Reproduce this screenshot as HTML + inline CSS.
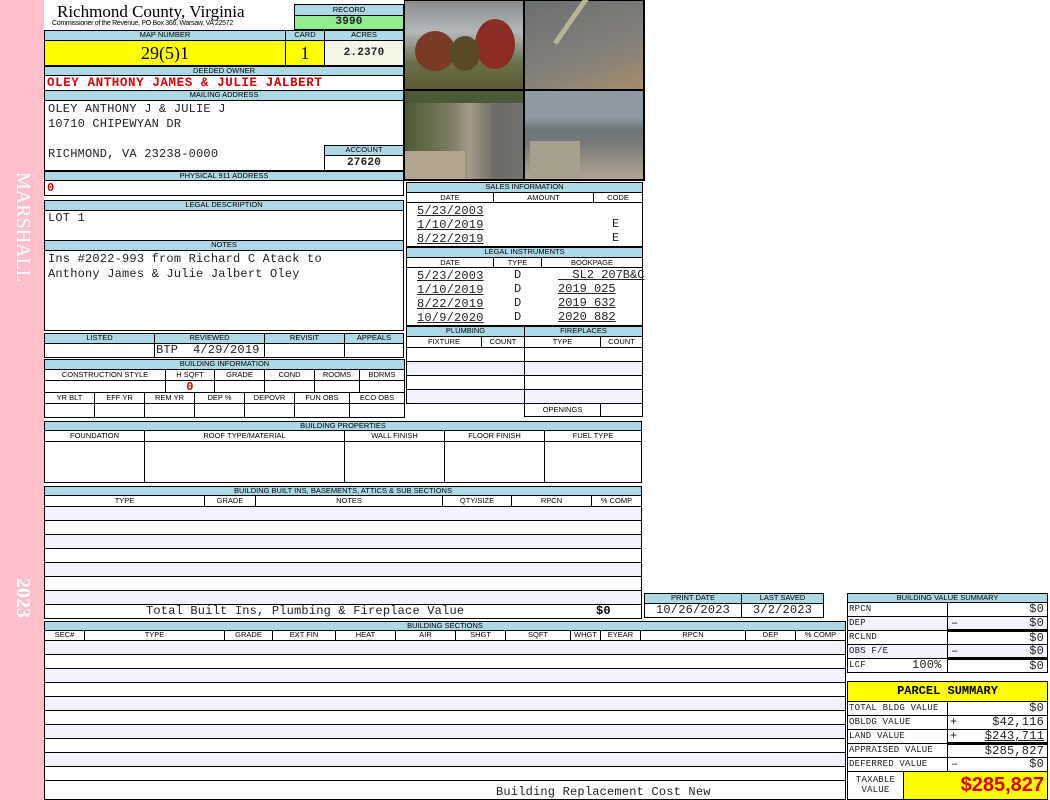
<!DOCTYPE html>
<html><head><meta charset="utf-8"><style>
*{margin:0;padding:0;box-sizing:border-box}
body{width:1050px;height:800px;background:#fff;position:relative;overflow:hidden;font-family:"Liberation Sans",sans-serif}
.c{position:absolute;border:1px solid #000;overflow:hidden;white-space:nowrap}
.h{background:#add8e6;font-size:7.5px;text-align:center;line-height:8px;color:#000}
.s{font-size:7.5px;text-align:center;line-height:9px}
.m{font-family:"Liberation Mono",monospace;font-size:12px;letter-spacing:.2px;color:#222}
.r{text-align:right;padding-right:3px}
.l{background:#f3f3fb}
.y{background:#ffff00}
.bx{border-bottom:3px solid #000}
</style></head><body>
<div style="position:absolute;left:0;top:0;width:44px;height:800px;background:#ffc0cb"></div>
<div style="position:absolute;left:10px;top:172px;width:24px;font-family:'Liberation Serif',serif;font-size:20px;color:#fff;writing-mode:vertical-rl;letter-spacing:0px">MARSHALL</div>
<div style="position:absolute;left:10px;top:578px;width:24px;font-family:'Liberation Serif',serif;font-size:20px;font-weight:bold;color:#fff;writing-mode:vertical-rl">2023</div>

<div style="position:absolute;left:57px;top:2px;font-family:'Liberation Serif',serif;font-size:17px">Richmond County, Virginia</div>
<div style="position:absolute;left:52px;top:20px;font-size:7px;letter-spacing:-0.3px">Commissioner of the Revenue, PO Box 366, Warsaw, VA 22572</div>

<div class="c h" style="left:294px;top:4px;width:110px;height:12px;line-height:10px">RECORD</div>
<div class="c m" style="left:294px;top:15px;width:110px;height:15px;background:#90ee90;text-align:center;font-weight:bold;line-height:13px;font-size:11px">3990</div>

<div class="c h" style="left:44px;top:30px;width:242px;height:11px">MAP NUMBER</div>
<div class="c h" style="left:285px;top:30px;width:40px;height:11px">CARD</div>
<div class="c h" style="left:324px;top:30px;width:80px;height:11px">ACRES</div>
<div class="c y" style="left:44px;top:40px;width:242px;height:26px;text-align:center;font-family:'Liberation Serif',serif;font-size:18px;line-height:24px">29(5)1</div>
<div class="c y" style="left:285px;top:40px;width:40px;height:26px;text-align:center;font-family:'Liberation Serif',serif;font-size:18px;line-height:24px">1</div>
<div class="c m" style="left:324px;top:40px;width:80px;height:26px;background:#f5f5e6;text-align:center;font-weight:bold;line-height:24px;font-size:11px">2.2370</div>

<div class="c h" style="left:44px;top:66px;width:360px;height:10px">DEEDED OWNER</div>
<div class="c m" style="left:44px;top:75px;width:360px;height:16px;color:#d00;font-weight:bold;font-size:12.5px;letter-spacing:.6px;line-height:15px;padding-left:2px">OLEY ANTHONY JAMES &amp; JULIE JALBERT</div>
<div class="c h" style="left:44px;top:90px;width:360px;height:11px">MAILING ADDRESS</div>
<div class="c m" style="left:44px;top:100px;width:360px;height:71px;padding-left:3px;line-height:15px;padding-top:1px">OLEY ANTHONY J &amp; JULIE J<br>10710 CHIPEWYAN DR<br><br>RICHMOND, VA 23238-0000</div>
<div class="c h" style="left:324px;top:145px;width:80px;height:11px">ACCOUNT</div>
<div class="c m" style="left:324px;top:155px;width:80px;height:16px;text-align:center;font-weight:bold;line-height:14px;font-size:11px">27620</div>
<div class="c h" style="left:44px;top:171px;width:360px;height:10px">PHYSICAL 911 ADDRESS</div>
<div class="c m" style="left:44px;top:180px;width:360px;height:16px;color:#b00;font-weight:bold;padding-left:2px;line-height:15px">0</div>

<!-- photos -->
<div style="position:absolute;left:404px;top:0;width:241px;height:181px;background:#000"></div>
<div style="position:absolute;left:405px;top:1px;width:118px;height:88px;background:linear-gradient(#8a8c8e 0%,#b5b8ba 35%,#a7a9a5 42%,#6a6f4a 70%,#5d5a32 100%)">
<div style="position:absolute;left:10px;top:30px;width:40px;height:40px;border-radius:50%;background:#7a3a25"></div>
<div style="position:absolute;left:70px;top:18px;width:40px;height:50px;border-radius:50%;background:#8b2c25"></div>
<div style="position:absolute;left:45px;top:35px;width:30px;height:35px;border-radius:50%;background:#5a4a2a"></div></div>
<div style="position:absolute;left:525px;top:1px;width:118px;height:88px;background:linear-gradient(160deg,#6b6e70,#84807a 60%,#a38d6e)">
<div style="position:absolute;left:30px;top:40px;width:90px;height:5px;background:#b8b49a;transform:rotate(-55deg);transform-origin:left"></div></div>
<div style="position:absolute;left:405px;top:91px;width:118px;height:88px;background:linear-gradient(90deg,#4d5a35 0%,#7f7e68 40%,#a59a88 55%,#6e6c66 75%,#707070 100%)">
<div style="position:absolute;left:0;top:0;width:118px;height:12px;background:#4a5a38"></div>
<div style="position:absolute;left:0;top:60px;width:60px;height:28px;background:#b0a48f"></div></div>
<div style="position:absolute;left:525px;top:91px;width:118px;height:88px;background:linear-gradient(#8e9aa3 0%,#8e9aa3 30%,#6b7378 45%,#7a7a78 60%,#b0a593 100%)">
<div style="position:absolute;left:5px;top:50px;width:50px;height:38px;background:#a8a08e"></div></div>

<!-- sales -->
<div class="c h" style="left:406px;top:182px;width:237px;height:11px">SALES INFORMATION</div>
<div class="c s" style="left:406px;top:192px;width:88px;height:11px">DATE</div>
<div class="c s" style="left:493px;top:192px;width:101px;height:11px">AMOUNT</div>
<div class="c s" style="left:593px;top:192px;width:50px;height:11px">CODE</div>
<div class="c m" style="left:406px;top:202px;width:237px;height:45px;line-height:14px;padding-left:10px;padding-top:1px;text-decoration:underline">5/23/2003<br>1/10/2019<br>8/22/2019</div>
<div class="m" style="position:absolute;left:612px;top:217px;line-height:14px">E<br>E</div>

<div class="c h" style="left:406px;top:247px;width:237px;height:11px">LEGAL INSTRUMENTS</div>
<div class="c s" style="left:406px;top:257px;width:88px;height:11px">DATE</div>
<div class="c s" style="left:493px;top:257px;width:49px;height:11px">TYPE</div>
<div class="c s" style="left:541px;top:257px;width:102px;height:11px">BOOKPAGE</div>
<div class="c m" style="left:406px;top:267px;width:237px;height:59px;line-height:14px;padding-left:10px;padding-top:1px;text-decoration:underline">5/23/2003<br>1/10/2019<br>8/22/2019<br>10/9/2020</div>
<div class="m" style="position:absolute;left:514px;top:268px;line-height:14px">D<br>D<br>D<br>D</div>
<div class="m" style="position:absolute;left:558px;top:268px;line-height:14px;text-decoration:underline;letter-spacing:0">&nbsp;&nbsp;SL2 207B&amp;C<br>2019 025<br>2019 632<br>2020 882</div>

<!-- legal/notes -->
<div class="c h" style="left:44px;top:200px;width:360px;height:11px">LEGAL DESCRIPTION</div>
<div class="c m" style="left:44px;top:210px;width:360px;height:31px;padding-left:3px;line-height:15px">LOT 1</div>
<div class="c h" style="left:44px;top:240px;width:360px;height:11px">NOTES</div>
<div class="c m" style="left:44px;top:250px;width:360px;height:81px;padding-left:3px;line-height:15px;padding-top:1px">Ins #2022-993 from Richard C Atack to<br>Anthony James &amp; Julie Jalbert Oley</div>

<!-- listed -->
<div class="c h" style="left:44px;top:333px;width:111px;height:11px">LISTED</div>
<div class="c h" style="left:154px;top:333px;width:111px;height:11px">REVIEWED</div>
<div class="c h" style="left:264px;top:333px;width:81px;height:11px">REVISIT</div>
<div class="c h" style="left:344px;top:333px;width:60px;height:11px">APPEALS</div>
<div class="c" style="left:44px;top:343px;width:111px;height:15px"></div>
<div class="c m" style="left:154px;top:343px;width:111px;height:15px;line-height:13px;padding-left:1px">BTP&nbsp;&nbsp;4/29/2019</div>
<div class="c" style="left:264px;top:343px;width:81px;height:15px"></div>
<div class="c" style="left:344px;top:343px;width:60px;height:15px"></div>

<!-- building info -->
<div class="c h" style="left:44px;top:359px;width:361px;height:11px">BUILDING INFORMATION</div>
<div class="c s" style="left:44px;top:369px;width:122px;height:12px">CONSTRUCTION STYLE</div>
<div class="c s" style="left:165px;top:369px;width:50px;height:12px">H SQFT</div>
<div class="c s" style="left:214px;top:369px;width:51px;height:12px">GRADE</div>
<div class="c s" style="left:264px;top:369px;width:51px;height:12px">COND</div>
<div class="c s" style="left:314px;top:369px;width:46px;height:12px">ROOMS</div>
<div class="c s" style="left:359px;top:369px;width:46px;height:12px">BDRMS</div>
<div class="c" style="left:44px;top:380px;width:122px;height:13px"></div>
<div class="c m" style="left:165px;top:380px;width:50px;height:13px;color:#c00;font-weight:bold;text-align:center;line-height:12px">0</div>
<div class="c" style="left:214px;top:380px;width:51px;height:13px"></div>
<div class="c" style="left:264px;top:380px;width:51px;height:13px"></div>
<div class="c" style="left:314px;top:380px;width:46px;height:13px"></div>
<div class="c" style="left:359px;top:380px;width:46px;height:13px"></div>
<div class="c s" style="left:44px;top:392px;width:51px;height:12px">YR BLT</div>
<div class="c s" style="left:94px;top:392px;width:51px;height:12px">EFF YR</div>
<div class="c s" style="left:144px;top:392px;width:51px;height:12px">REM YR</div>
<div class="c s" style="left:194px;top:392px;width:51px;height:12px">DEP %</div>
<div class="c s" style="left:244px;top:392px;width:51px;height:12px">DEPOVR</div>
<div class="c s" style="left:294px;top:392px;width:56px;height:12px">FUN OBS</div>
<div class="c s" style="left:349px;top:392px;width:56px;height:12px">ECO OBS</div>
<div class="c" style="left:44px;top:403px;width:51px;height:15px"></div>
<div class="c" style="left:94px;top:403px;width:51px;height:15px"></div>
<div class="c" style="left:144px;top:403px;width:51px;height:15px"></div>
<div class="c" style="left:194px;top:403px;width:51px;height:15px"></div>
<div class="c" style="left:244px;top:403px;width:51px;height:15px"></div>
<div class="c" style="left:294px;top:403px;width:56px;height:15px"></div>
<div class="c" style="left:349px;top:403px;width:56px;height:15px"></div>

<!-- plumbing -->
<div class="c h" style="left:406px;top:326px;width:119px;height:11px">PLUMBING</div>
<div class="c h" style="left:524px;top:326px;width:119px;height:11px">FIREPLACES</div>
<div class="c s" style="left:406px;top:336px;width:76px;height:12px">FIXTURE</div>
<div class="c s" style="left:481px;top:336px;width:44px;height:12px">COUNT</div>
<div class="c s" style="left:524px;top:336px;width:77px;height:12px">TYPE</div>
<div class="c s" style="left:600px;top:336px;width:43px;height:12px">COUNT</div>
<div class="c" style="left:406px;top:347px;width:119px;height:15px"></div>
<div class="c l" style="left:406px;top:361px;width:119px;height:15px"></div>
<div class="c" style="left:406px;top:375px;width:119px;height:15px"></div>
<div class="c l" style="left:406px;top:389px;width:119px;height:15px"></div>
<div class="c" style="left:524px;top:347px;width:119px;height:15px"></div>
<div class="c l" style="left:524px;top:361px;width:119px;height:15px"></div>
<div class="c" style="left:524px;top:375px;width:119px;height:15px"></div>
<div class="c l" style="left:524px;top:389px;width:119px;height:15px"></div>
<div class="c s" style="left:524px;top:403px;width:77px;height:14px;line-height:12px">OPENINGS</div>
<div class="c" style="left:600px;top:403px;width:43px;height:14px"></div>

<!-- building properties -->
<div class="c h" style="left:44px;top:421px;width:598px;height:10px">BUILDING PROPERTIES</div>
<div class="c s" style="left:44px;top:430px;width:101px;height:12px">FOUNDATION</div>
<div class="c s" style="left:144px;top:430px;width:201px;height:12px">ROOF TYPE/MATERIAL</div>
<div class="c s" style="left:344px;top:430px;width:101px;height:12px">WALL FINISH</div>
<div class="c s" style="left:444px;top:430px;width:101px;height:12px">FLOOR FINISH</div>
<div class="c s" style="left:544px;top:430px;width:98px;height:12px">FUEL TYPE</div>
<div class="c" style="left:44px;top:441px;width:101px;height:42px"></div>
<div class="c" style="left:144px;top:441px;width:201px;height:42px"></div>
<div class="c" style="left:344px;top:441px;width:101px;height:42px"></div>
<div class="c" style="left:444px;top:441px;width:101px;height:42px"></div>
<div class="c" style="left:544px;top:441px;width:98px;height:42px"></div>

<!-- built ins -->
<div class="c h" style="left:44px;top:486px;width:598px;height:10px">BUILDING BUILT INS, BASEMENTS, ATTICS &amp; SUB SECTIONS</div>
<div class="c s" style="left:44px;top:495px;width:161px;height:12px">TYPE</div>
<div class="c s" style="left:204px;top:495px;width:52px;height:12px">GRADE</div>
<div class="c s" style="left:255px;top:495px;width:188px;height:12px">NOTES</div>
<div class="c s" style="left:442px;top:495px;width:70px;height:12px">QTY/SIZE</div>
<div class="c s" style="left:511px;top:495px;width:81px;height:12px">RPCN</div>
<div class="c s" style="left:591px;top:495px;width:51px;height:12px">% COMP</div>
<div class="c l" style="left:44px;top:506px;width:598px;height:15px"></div>
<div class="c" style="left:44px;top:520px;width:598px;height:15px"></div>
<div class="c l" style="left:44px;top:534px;width:598px;height:15px"></div>
<div class="c" style="left:44px;top:548px;width:598px;height:15px"></div>
<div class="c l" style="left:44px;top:562px;width:598px;height:15px"></div>
<div class="c" style="left:44px;top:576px;width:598px;height:15px"></div>
<div class="c l" style="left:44px;top:590px;width:598px;height:15px"></div>
<div class="c m" style="left:44px;top:604px;width:598px;height:15px;line-height:13px;padding-left:101px">Total Built Ins, Plumbing &amp; Fireplace Value<span style="position:absolute;left:551px;font-weight:bold;color:#000">$0</span></div>

<!-- print date -->
<div class="c h" style="left:644px;top:593px;width:98px;height:11px">PRINT DATE</div>
<div class="c h" style="left:741px;top:593px;width:83px;height:11px">LAST SAVED</div>
<div class="c m" style="left:644px;top:603px;width:98px;height:15px;text-align:center;line-height:13px">10/26/2023</div>
<div class="c m" style="left:741px;top:603px;width:83px;height:15px;text-align:center;line-height:13px">3/2/2023</div>

<!-- building sections -->
<div class="c h" style="left:44px;top:621px;width:802px;height:10px">BUILDING SECTIONS</div>
<div class="c s" style="left:44px;top:630px;width:41px;height:11px;line-height:8px">SEC#</div>
<div class="c s" style="left:84px;top:630px;width:141px;height:11px;line-height:8px">TYPE</div>
<div class="c s" style="left:224px;top:630px;width:49px;height:11px;line-height:8px">GRADE</div>
<div class="c s" style="left:272px;top:630px;width:64px;height:11px;line-height:8px">EXT FIN</div>
<div class="c s" style="left:335px;top:630px;width:61px;height:11px;line-height:8px">HEAT</div>
<div class="c s" style="left:395px;top:630px;width:61px;height:11px;line-height:8px">AIR</div>
<div class="c s" style="left:455px;top:630px;width:51px;height:11px;line-height:8px">SHGT</div>
<div class="c s" style="left:505px;top:630px;width:66px;height:11px;line-height:8px">SQFT</div>
<div class="c s" style="left:570px;top:630px;width:31px;height:11px;line-height:8px">WHGT</div>
<div class="c s" style="left:600px;top:630px;width:41px;height:11px;line-height:8px">EYEAR</div>
<div class="c s" style="left:640px;top:630px;width:106px;height:11px;line-height:8px">RPCN</div>
<div class="c s" style="left:745px;top:630px;width:51px;height:11px;line-height:8px">DEP</div>
<div class="c s" style="left:795px;top:630px;width:51px;height:11px;line-height:8px">% COMP</div>
<div class="c l" style="left:44px;top:640px;width:802px;height:15px"></div>
<div class="c" style="left:44px;top:654px;width:802px;height:15px"></div>
<div class="c l" style="left:44px;top:668px;width:802px;height:15px"></div>
<div class="c" style="left:44px;top:682px;width:802px;height:15px"></div>
<div class="c l" style="left:44px;top:696px;width:802px;height:15px"></div>
<div class="c" style="left:44px;top:710px;width:802px;height:15px"></div>
<div class="c l" style="left:44px;top:724px;width:802px;height:15px"></div>
<div class="c" style="left:44px;top:738px;width:802px;height:15px"></div>
<div class="c l" style="left:44px;top:752px;width:802px;height:15px"></div>
<div class="c" style="left:44px;top:766px;width:802px;height:15px"></div>
<div class="c m" style="left:44px;top:780px;width:802px;height:20px;line-height:22px;padding-left:451px">Building Replacement Cost New</div>

<!-- building value summary -->
<div class="c h" style="left:847px;top:593px;width:201px;height:10px">BUILDING VALUE SUMMARY</div>
<div class="c m" style="left:847px;top:602px;width:101px;height:15px;font-size:9px;line-height:13px;padding-left:1px">RPCN</div>
<div class="c m r" style="left:947px;top:602px;width:101px;height:15px;line-height:13px">$0</div>
<div class="c m l" style="left:847px;top:616px;width:101px;height:15px;font-size:9px;line-height:13px;padding-left:1px">DEP</div>
<div class="c m r l bx" style="left:947px;top:616px;width:101px;height:16px;line-height:12px"><span style="position:absolute;left:3px">–</span>$0</div>
<div class="c m" style="left:847px;top:630px;width:101px;height:15px;font-size:9px;line-height:13px;padding-left:1px">RCLND</div>
<div class="c m r" style="left:947px;top:631px;width:101px;height:14px;line-height:12px">$0</div>
<div class="c m l" style="left:847px;top:644px;width:101px;height:15px;font-size:9px;line-height:13px;padding-left:1px">OBS F/E</div>
<div class="c m r l bx" style="left:947px;top:644px;width:101px;height:16px;line-height:12px"><span style="position:absolute;left:3px">–</span>$0</div>
<div class="c m" style="left:847px;top:658px;width:101px;height:15px;font-size:9px;line-height:13px;padding-left:1px">LCF<span style="position:absolute;left:64px;font-size:12px">100%</span></div>
<div class="c m r" style="left:947px;top:659px;width:101px;height:14px;line-height:12px">$0</div>

<!-- parcel summary -->
<div class="c y" style="left:847px;top:681px;width:201px;height:21px;text-align:center;font-family:'Liberation Mono',monospace;font-weight:bold;font-size:12px;line-height:19px">PARCEL SUMMARY</div>
<div class="c m" style="left:847px;top:701px;width:101px;height:15px;font-size:9px;line-height:13px;padding-left:1px">TOTAL BLDG VALUE</div>
<div class="c m r" style="left:947px;top:701px;width:101px;height:15px;line-height:13px">$0</div>
<div class="c m" style="left:847px;top:715px;width:101px;height:15px;font-size:9px;line-height:13px;padding-left:1px">OBLDG VALUE</div>
<div class="c m r" style="left:947px;top:715px;width:101px;height:15px;line-height:13px"><span style="position:absolute;left:2px">+</span>$42,116</div>
<div class="c m" style="left:847px;top:729px;width:101px;height:15px;font-size:9px;line-height:13px;padding-left:1px">LAND VALUE</div>
<div class="c m r bx" style="left:947px;top:729px;width:101px;height:16px;line-height:12px;text-decoration:underline"><span style="position:absolute;left:2px">+</span>$243,711</div>
<div class="c m" style="left:847px;top:743px;width:101px;height:15px;font-size:9px;line-height:13px;padding-left:1px">APPRAISED VALUE</div>
<div class="c m r" style="left:947px;top:744px;width:101px;height:14px;line-height:12px">$285,827</div>
<div class="c m" style="left:847px;top:757px;width:101px;height:15px;font-size:9px;line-height:13px;padding-left:1px">DEFERRED VALUE</div>
<div class="c m r" style="left:947px;top:757px;width:101px;height:15px;line-height:13px"><span style="position:absolute;left:3px">–</span>$0</div>
<div class="c m" style="left:847px;top:771px;width:57px;height:29px;font-size:9px;line-height:10px;text-align:center;padding-top:3px">TAXABLE<br>VALUE</div>
<div class="c y" style="left:903px;top:771px;width:145px;height:29px;text-align:right;padding-right:3px;color:#e00000;font-weight:bold;font-size:20px;line-height:27px">$285,827</div>
</body></html>
